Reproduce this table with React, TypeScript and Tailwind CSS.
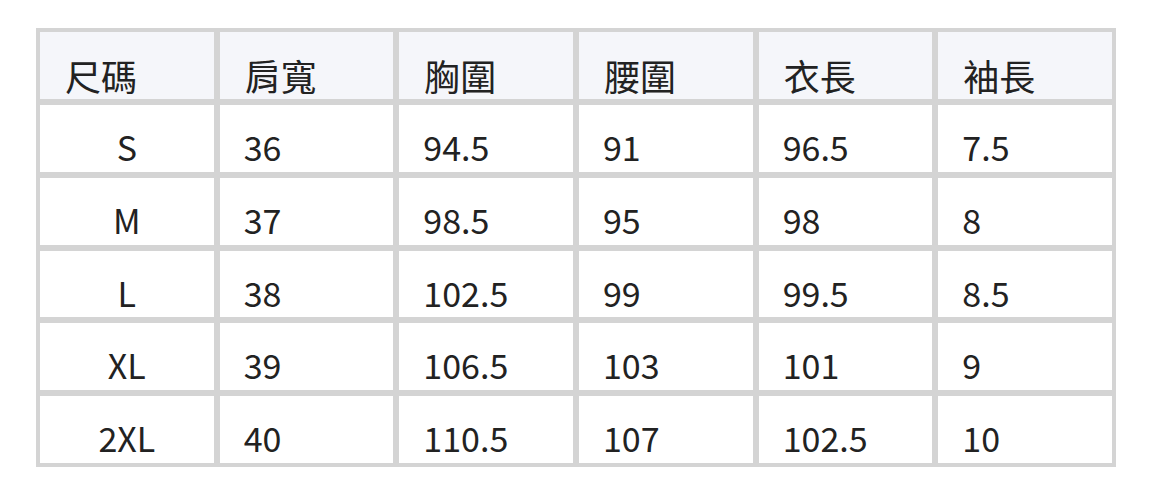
import React from "react";

const headers = ["尺碼", "肩寬", "胸圍", "腰圍", "衣長", "袖長"];
const rows = [
  ["S", "36", "94.5", "91", "96.5", "7.5"],
  ["M", "37", "98.5", "95", "98", "8"],
  ["L", "38", "102.5", "99", "99.5", "8.5"],
  ["XL", "39", "106.5", "103", "101", "9"],
  ["2XL", "40", "110.5", "107", "102.5", "10"],
];

export default function App() {
  return (
    <div className="w-[1152px] h-[495px] bg-white pt-[28px] pl-[36px]">
      <div
        className="w-[1080px] h-[439px] grid grid-cols-6 grid-rows-6 gap-[6px] p-[4px] bg-[#d4d4d4] text-[34px] leading-none text-[#222]"
        style={{ fontFamily: '"Noto Sans CJK TC", "Noto Sans", sans-serif' }}
      >
        {headers.map((h) => (
          <div key={h} className="bg-[#f5f6fa] pt-[25px] pl-[25px] text-[36px]">
            {h}
          </div>
        ))}
        {rows.map((r) =>
          r.map((c, i) => (
            <div
              key={r[0] + i}
              className={
                i === 0
                  ? "bg-white pt-[25px] text-center"
                  : "bg-white pt-[25px] pl-[24px]"
              }
            >
              {c}
            </div>
          ))
        )}
      </div>
    </div>
  );
}
